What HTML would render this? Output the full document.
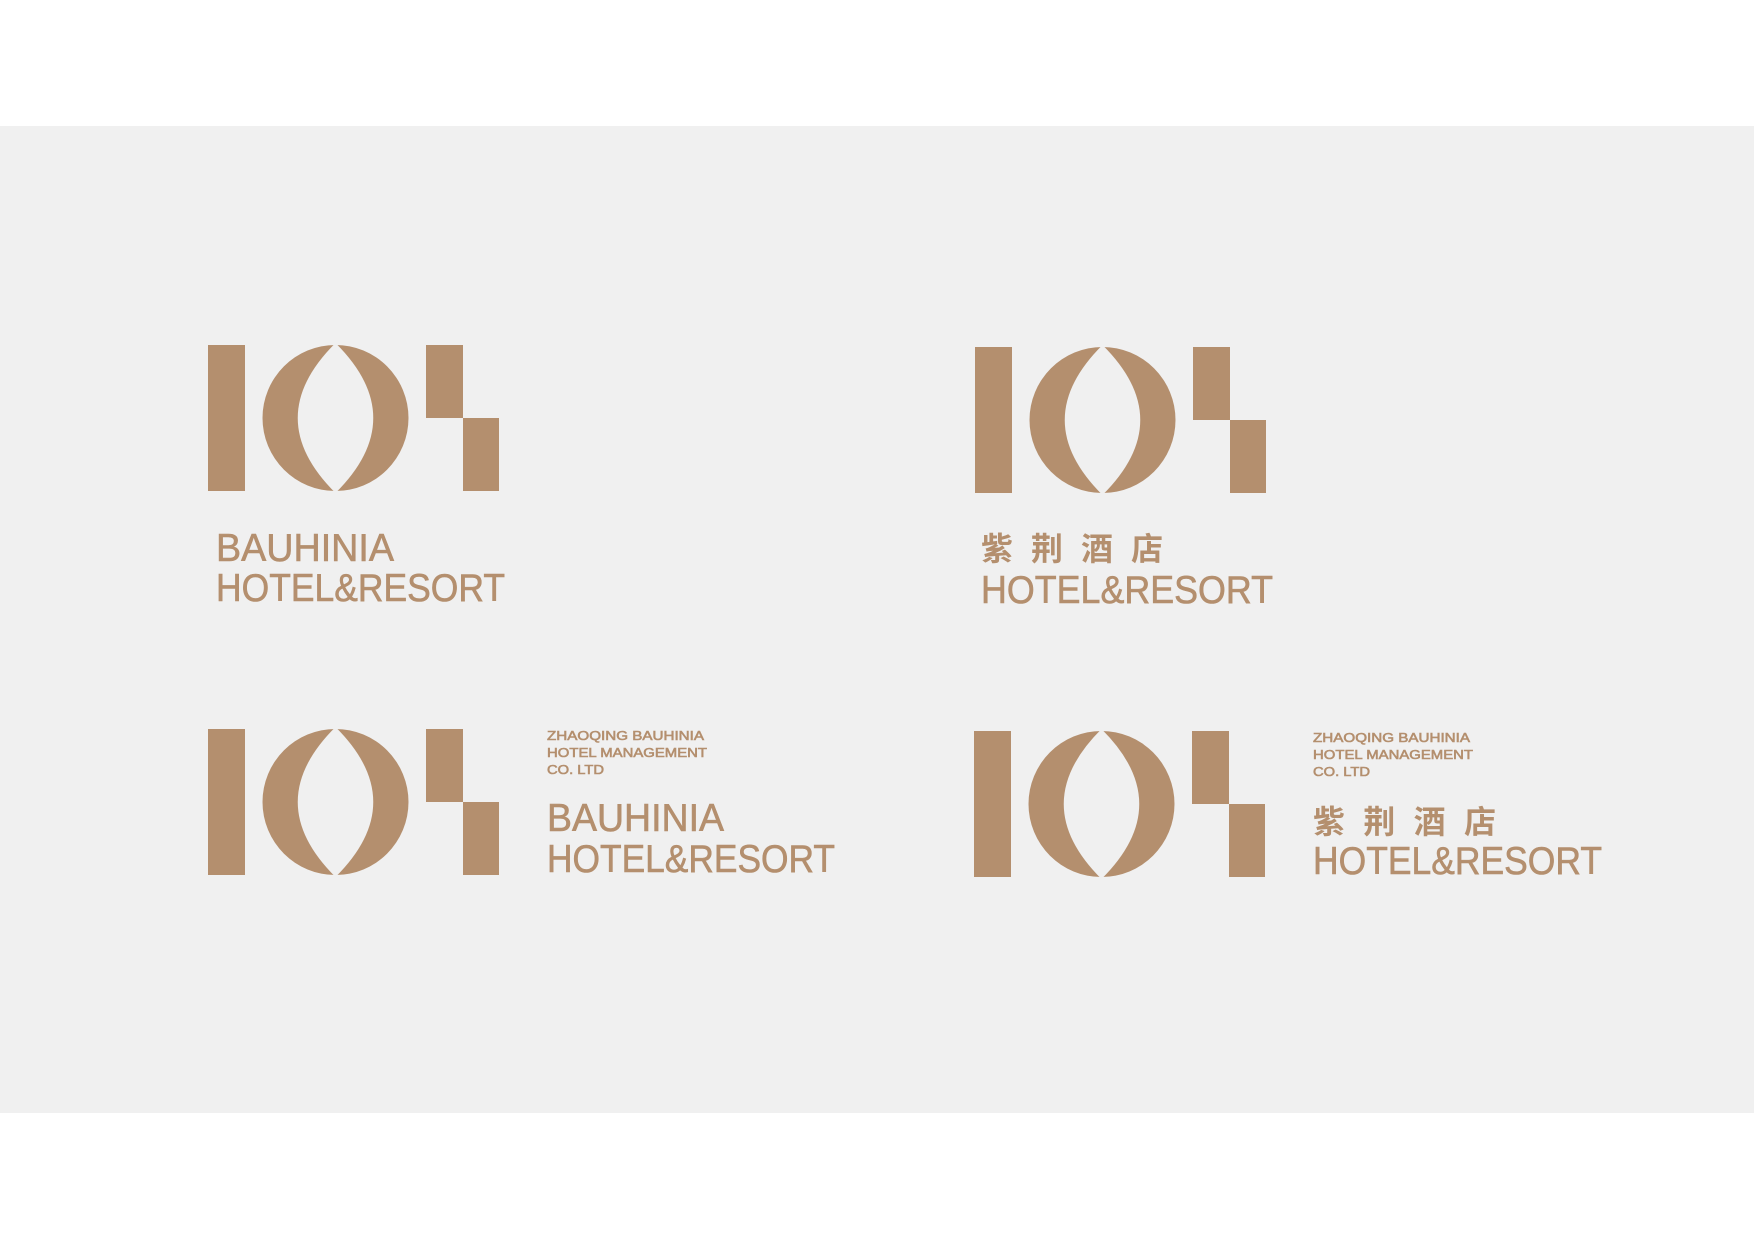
<!DOCTYPE html>
<html><head><meta charset="utf-8"><style>
html,body{margin:0;padding:0;background:#fff;}
svg{display:block}
text{font-family:"Liberation Sans","Noto Sans CJK SC",sans-serif;fill:#b48f6e;stroke:#b48f6e;stroke-width:0.6}
.cn{font-weight:bold;stroke-width:0}
</style></head><body>
<svg width="1754" height="1240" viewBox="0 0 1754 1240" xmlns="http://www.w3.org/2000/svg">
<defs>
<g id="m">
<rect x="0" y="0" width="37" height="146" fill="#b48f6e"/>
<circle cx="127.5" cy="73" r="73" fill="#b48f6e"/>
<path d="M127.5,-2 Q52,73 127.5,148 Q203,73 127.5,-2 Z" fill="#f0f0f0"/>
<rect x="126" y="-1" width="3" height="148" fill="#f0f0f0"/>
<rect x="218" y="0" width="37" height="73" fill="#b48f6e"/>
<rect x="255" y="73" width="36" height="73" fill="#b48f6e"/>
</g>
</defs>
<rect x="0" y="126" width="1754" height="987" fill="#f0f0f0"/>
<use href="#m" x="208" y="345"/>
<use href="#m" x="975" y="347"/>
<use href="#m" x="208" y="729"/>
<use href="#m" x="974" y="731"/>

<text x="216" y="561" font-size="39" textLength="178" lengthAdjust="spacingAndGlyphs">BAUHINIA</text>
<text x="216" y="601" font-size="39" textLength="289" lengthAdjust="spacingAndGlyphs">HOTEL&amp;RESORT</text>

<text class="cn" x="981" y="560" font-size="32" textLength="182" lengthAdjust="spacing">紫荆酒店</text>
<text x="981" y="603" font-size="39" textLength="292" lengthAdjust="spacingAndGlyphs">HOTEL&amp;RESORT</text>

<text x="547" y="740" font-size="13" stroke-width="0.2" textLength="157" lengthAdjust="spacingAndGlyphs">ZHAOQING BAUHINIA</text>
<text x="547" y="757" font-size="13" stroke-width="0.2" textLength="160" lengthAdjust="spacingAndGlyphs">HOTEL MANAGEMENT</text>
<text x="547" y="774" font-size="13" stroke-width="0.2" textLength="57" lengthAdjust="spacingAndGlyphs">CO. LTD</text>
<text x="547" y="831" font-size="39" textLength="177" lengthAdjust="spacingAndGlyphs">BAUHINIA</text>
<text x="547" y="872" font-size="39" textLength="288" lengthAdjust="spacingAndGlyphs">HOTEL&amp;RESORT</text>

<text x="1313" y="742" font-size="13" stroke-width="0.2" textLength="157" lengthAdjust="spacingAndGlyphs">ZHAOQING BAUHINIA</text>
<text x="1313" y="759" font-size="13" stroke-width="0.2" textLength="160" lengthAdjust="spacingAndGlyphs">HOTEL MANAGEMENT</text>
<text x="1313" y="776" font-size="13" stroke-width="0.2" textLength="57" lengthAdjust="spacingAndGlyphs">CO. LTD</text>
<text class="cn" x="1313" y="833" font-size="32" textLength="183" lengthAdjust="spacing">紫荆酒店</text>
<text x="1313" y="874" font-size="39" textLength="289" lengthAdjust="spacingAndGlyphs">HOTEL&amp;RESORT</text>
</svg>
</body></html>
